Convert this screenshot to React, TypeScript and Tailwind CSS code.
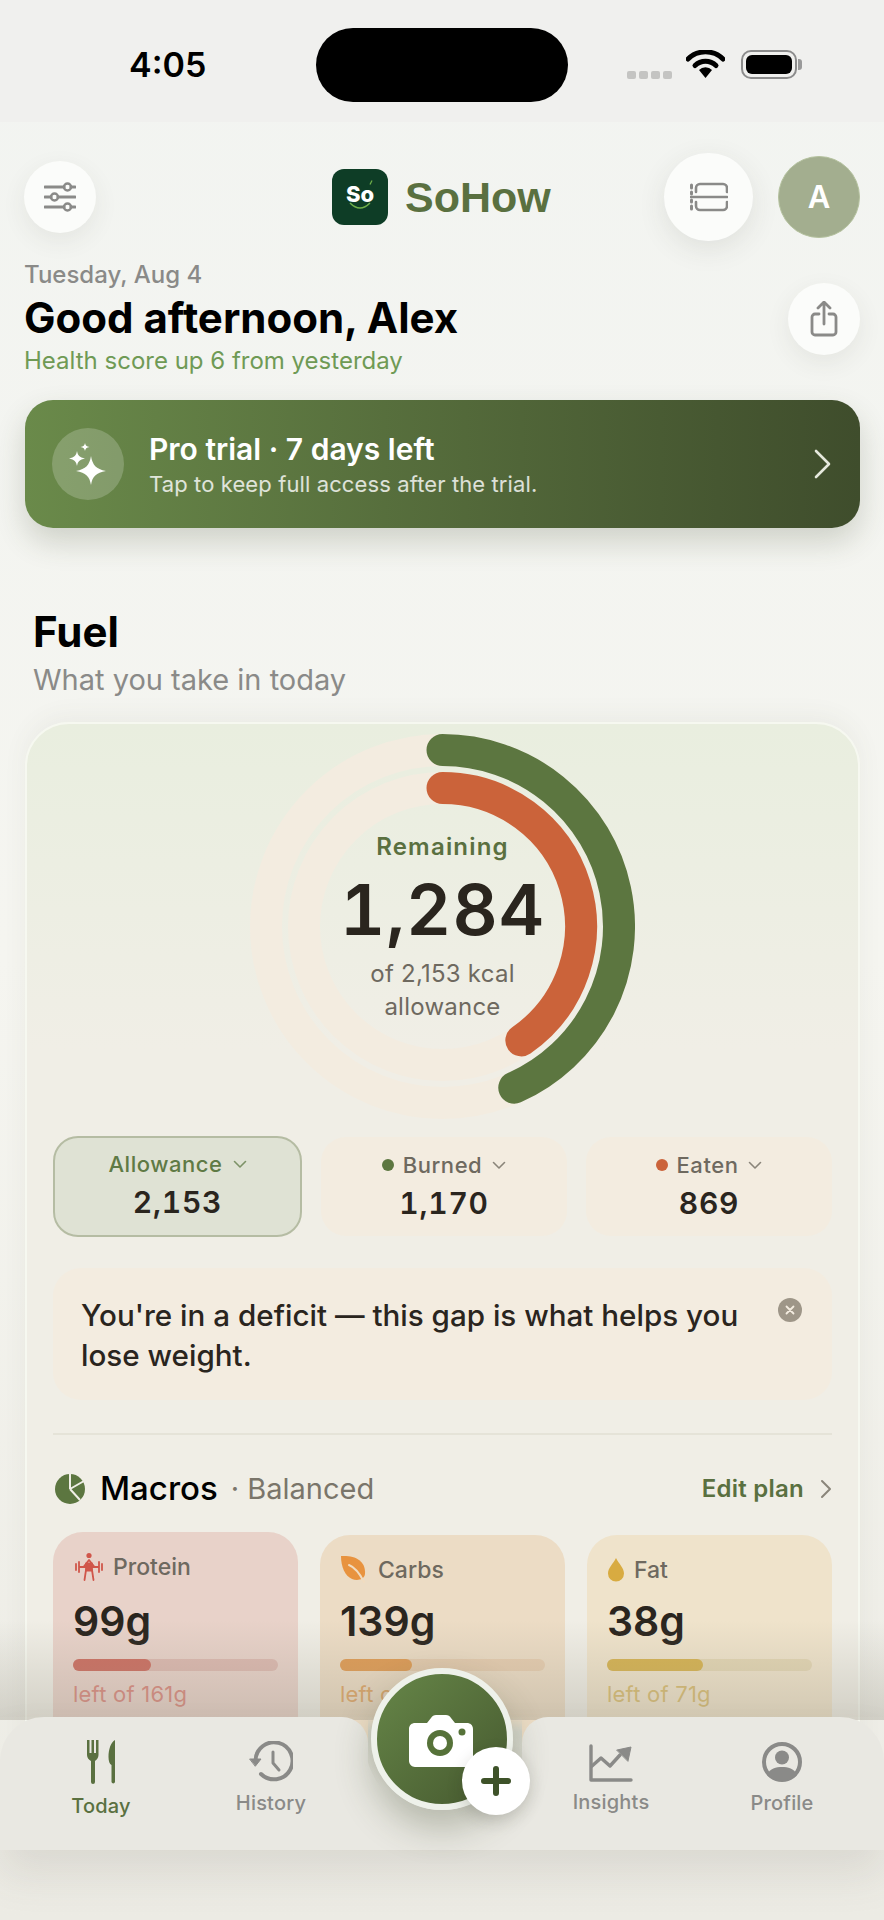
import React from "react";

const F = "font-['Inter','Noto_Sans',sans-serif]";

function arc(r: number, deg: number) {
  const c = 192.5;
  const a = (deg * Math.PI) / 180;
  return `M ${c} ${c - r} A ${r} ${r} 0 0 1 ${c + r * Math.sin(a)} ${c - r * Math.cos(a)}`;
}

function Ring() {
  return (
    <div className="grid w-[385px] h-[385px] mx-auto">
      <svg width="385" height="385" viewBox="0 0 385 385" className="[grid-area:1/1]">
        <circle cx="192.5" cy="192.5" r="176.5" fill="none" stroke="#f3ece0" strokeWidth="32" />
        <circle cx="192.5" cy="192.5" r="138.5" fill="none" stroke="#f3ece0" strokeWidth="32" />
        <path d={arc(176.5, 156)} fill="none" stroke="#5c7640" strokeWidth="32" strokeLinecap="round" />
        <path d={arc(138.5, 145.3)} fill="none" stroke="#cb633a" strokeWidth="32" strokeLinecap="round" />
      </svg>
      <div className="[grid-area:1/1] flex flex-col items-center pt-[99px]">
        <div className="text-[24px] leading-[28px] font-semibold tracking-[0.05em] text-[#5a7040]">Remaining</div>
        <div className="text-[70px] leading-[84px] mt-[7px] font-semibold tabular-nums tracking-[0.015em] text-[#2a251e]">1,284</div>
        <div className="text-[24px] leading-[33px] mt-[5px] tracking-[0.01em] text-[#6e695f] text-center">
          of 2,153 kcal
          <br />
          allowance
        </div>
      </div>
    </div>
  );
}

function Chev({ c = "#8a857a" }: { c?: string }) {
  return (
    <svg width="14" height="9" viewBox="0 0 14 9" fill="none">
      <path d="M1.5 1.5 L7 7 L12.5 1.5" stroke={c} strokeWidth="1.6" strokeLinecap="round" strokeLinejoin="round" />
    </svg>
  );
}

function Tile({ label, value, dot, active }: { label: string; value: string; dot?: string; active?: boolean }) {
  return (
    <div
      className={
        active
          ? "w-[249px] h-[101px] rounded-[25px] bg-[#dfe2d4] border-2 border-[#b5bca3] flex flex-col items-center pt-[12px]"
          : "w-[246px] h-[99px] rounded-[25px] bg-[#f3ece0] flex flex-col items-center pt-[14px]"
      }
    >
      <div className={`flex items-center text-[22px] leading-[28px] font-medium tracking-[0.025em] ${active ? "text-[#5f7a45]" : "text-[#6e695f]"}`}>
        {dot && <span className="w-[12px] h-[12px] rounded-full mr-[9px]" style={{ background: dot }} />}
        <span>{label}</span>
        <span className="ml-[10px]">
          <Chev c={active ? "#7d9267" : "#8a857a"} />
        </span>
      </div>
      <div className="text-[30px] leading-[38px] mt-[5px] font-semibold tabular-nums tracking-[0.025em] text-[#2a251e]">{value}</div>
    </div>
  );
}

function Lifter() {
  return (
    <svg width="28" height="30" viewBox="0 0 28 30" fill="none" stroke="#d0564a" strokeWidth="1.8" strokeLinecap="round" strokeLinejoin="round">
      <circle cx="14" cy="3.5" r="2.6" fill="#d0564a" stroke="none" />
      <path d="M1 12v6M4 10v10M24 10v10M27 12v6M4 15h20" />
      <path d="M8.500 15 L14 8 L19.500 15" />
      <path d="M11 11.500h6v7h-6z" fill="#d0564a" />
      <path d="M11 18 L9.500 28M17 18 L18.500 28" />
    </svg>
  );
}
function Leaf() {
  return (
    <svg width="28" height="30" viewBox="0 0 28 30">
      <path d="M1 1 C14 0 26 5 25 19 C24 25 17 26 12 24 C5 21 1 12 1 1 Z" fill="#e8933f" />
      <path d="M9 10 C14 12 19 17 24 27" fill="none" stroke="#f1dcc0" strokeWidth="2" strokeLinecap="round" />
    </svg>
  );
}
function Drop() {
  return (
    <svg width="18" height="24" viewBox="0 0 18 24">
      <path d="M9 0 C12 6 17 10 17 15.500 A8 8 0 0 1 1 15.500 C1 10 6 6 9 0 Z" fill="#d8ab41" />
    </svg>
  );
}

function Macro({ icon, label, val, left, fill, bg, track, bar, leftC, top, gap, valMt, leftMt }: {
  icon: React.ReactNode; label: string; val: string; left: string; fill: number; bg: string; track: string; bar: string; leftC: string; top: string; gap: string; valMt: string; leftMt: string;
}) {
  return (
    <div className={`w-[245px] h-[260px] rounded-[30px] px-[20px] pt-[20px] ${bg} ${top}`}>
      <div className={`flex items-center h-[30px] text-[23px] font-medium text-[#6e695f] ${gap}`}>
        {icon}
        <span>{label}</span>
      </div>
      <div className={`text-[41px] leading-[48px] font-semibold text-[#2a251e] ${valMt}`}>{val}</div>
      <div className={`h-[12px] mt-[14px] rounded-full ${track}`}>
        <div className={`h-full rounded-full ${bar}`} style={{ width: `${fill}%` }} />
      </div>
      <div className={`text-[22px] leading-[28px] tracking-[0.01em] ${leftC} ${leftMt}`}>{left}</div>
    </div>
  );
}

function Tab({ icon, label, active, cls, labelCls }: { icon: React.ReactNode; label: string; active?: boolean; cls: string; labelCls: string }) {
  return (
    <div className={`flex flex-col items-center w-[120px] ${cls}`}>
      <div className="h-[46px] flex items-center justify-center">{icon}</div>
      <div className={`text-[20px] leading-[26px] font-medium tracking-[0.01em] ${labelCls} ${active ? "text-[#5a7040]" : "text-[#8a8a88]"}`}>{label}</div>
    </div>
  );
}

export default function App() {
  return (
    <div className={`relative w-[884px] h-[1920px] overflow-hidden bg-gradient-to-b from-[#f2f4f1] via-[#f5f5f0] to-[#ecebe4] ${F}`}>
      {/* status bar */}
      <div className="h-[122px] bg-[#f0f0ee] flex items-start">
        <div className="ml-[129px] mt-[44px] text-[34px] leading-[42px] font-semibold text-black w-[187px]">4:05</div>
        <div className="mt-[28px] w-[252px] h-[74px] rounded-[37px] bg-black" />
        <div className="ml-[59px] mt-[71px] flex gap-[3px]">
          {[0, 1, 2, 3].map((i) => (
            <span key={i} className="w-[9px] h-[8px] rounded-[2px] bg-[#c4c4c2]" />
          ))}
        </div>
        <svg className="ml-[14px] mt-[50px]" width="39" height="28" viewBox="0 0 39 28">
          <path d="M2 9 A25 25 0 0 1 37 9" fill="none" stroke="#000" strokeWidth="5" strokeLinecap="round" />
          <path d="M9 15.500 A15 15 0 0 1 30 15.500" fill="none" stroke="#000" strokeWidth="5" strokeLinecap="round" />
          <path d="M13 20 A9 9 0 0 1 26 20 L19.500 28 Z" fill="#000" />
        </svg>
        <div className="ml-[16px] mt-[50px] flex items-center">
          <div className="w-[56px] h-[29px] rounded-[10px] border-2 border-[#8c8c8c] p-[3px]">
            <div className="w-full h-full rounded-[6px] bg-black" />
          </div>
          <div className="w-[4px] h-[11px] ml-[1px] rounded-r-[3px] bg-[#9a9a9a]" />
        </div>
      </div>

      {/* header */}
      <div className="h-[88px] mt-[31px] flex items-center pl-[24px] pr-[24px]">
        <div className="w-[72px] h-[72px] rounded-full bg-[#fbfcfa] shadow-[0_8px_24px_rgba(60,60,50,0.08)] flex items-center justify-center">
          <svg width="32" height="30" viewBox="0 0 32 30" fill="none" stroke="#8a8a88" strokeWidth="3" strokeLinecap="round">
            <path d="M1 5h19M27 5h4M1 15h6M14 15h17M1 25h19M27 25h4" />
            <circle cx="23.500" cy="5" r="3.500" strokeWidth="2.500" />
            <circle cx="10.500" cy="15" r="3.500" strokeWidth="2.500" />
            <circle cx="23.500" cy="25" r="3.500" strokeWidth="2.500" />
          </svg>
        </div>
        <div className="ml-[236px] w-[56px] h-[56px] rounded-[12px] bg-[#0e3d26] flex flex-col items-center justify-center">
          <svg className="self-end mr-[15px] mt-[-4px] mb-[1px]" width="4" height="5" viewBox="0 0 4 5">
            <path d="M1 4.500 L3 0.500" stroke="#6fb04a" strokeWidth="1.200" />
          </svg>
          <span className="text-[22px] leading-[22px] font-extrabold text-white mt-[-3px]">So</span>
          <svg className="mt-[-3px]" width="24" height="8" viewBox="0 0 24 8">
            <path d="M2 1 Q12 11 22 1" fill="none" stroke="#6fb04a" strokeWidth="1.500" />
          </svg>
        </div>
        <div className="ml-[17px] font-['Liberation_Sans',sans-serif] font-bold text-[43px] leading-[50px] text-[#5a7040]">SoHow</div>
        <div className="ml-auto w-[89px] h-[88px] rounded-full bg-[#fbfcfa] shadow-[0_8px_28px_rgba(60,60,50,0.1)] flex items-center justify-center">
          <svg width="38" height="30" viewBox="0 0 38 30" fill="none" stroke="#8a8a88" strokeWidth="2.600" strokeLinecap="round">
            <path d="M6 10V6a4 4 0 0 1 4-4h23a4 4 0 0 1 4 4v4M37 20v4a4 4 0 0 1-4 4H10a4 4 0 0 1-4-4v-4" />
            <path d="M1 15h36" />
            <path d="M1.500 3v3M1.500 10v2M1.500 18v2M1.500 24v3" strokeWidth="3" />
          </svg>
        </div>
        <div className="ml-[25px] w-[82px] h-[82px] rounded-full bg-[#a3ae8f] border border-[#b5c29f] flex items-center justify-center text-white text-[31px] font-semibold">A</div>
      </div>

      {/* greeting */}
      <div className="flex items-start pl-[24px] pr-[24px] mt-[20px]">
        <div>
          <div className="text-[24px] leading-[28px] font-medium text-[#8a8a88]">Tuesday, Aug 4</div>
          <div className="text-[42px] leading-[50px] mt-[4px] font-bold text-black">Good afternoon, Alex</div>
          <div className="text-[24px] leading-[28px] mt-[4px] text-[#6f9a55]">Health score up 6 from yesterday</div>
        </div>
        <div className="ml-auto mt-[22px] w-[72px] h-[72px] rounded-full bg-[#fbfcfa] shadow-[0_8px_24px_rgba(60,60,50,0.08)] flex items-center justify-center">
          <svg width="28" height="36" viewBox="0 0 28 36" fill="none" stroke="#8a8a88" strokeWidth="2.800" strokeLinecap="round" strokeLinejoin="round">
            <path d="M14 23V2M8 7l6-6 6 6" />
            <path d="M9 13H5a3 3 0 0 0-3 3v15a3 3 0 0 0 3 3h18a3 3 0 0 0 3-3V16a3 3 0 0 0-3-3h-4" />
          </svg>
        </div>
      </div>

      {/* banner */}
      <div className="mx-[25px] mt-[25px] w-[835px] h-[128px] rounded-[28px] bg-gradient-to-r from-[#6a8a4a] to-[#3f4d2c] shadow-[0_14px_30px_rgba(60,70,40,0.2)] flex items-center pl-[27px] pr-[28px]">
        <div className="w-[72px] h-[72px] rounded-full bg-white/20 flex items-center justify-center">
          <svg width="38" height="42" viewBox="0 0 38 42" fill="#fff">
            <path d="M22 13 C23.500 22 27 26 37 28 C27 30 23.500 33 22 42 C20.500 33 17 30 7 28 C17 26 20.500 22 22 13 Z" />
            <path d="M8 8 C8.800 12.500 10.500 14.500 16 15.500 C10.500 16.500 8.800 18.500 8 23 C7.200 18.500 5.500 16.500 0 15.500 C5.500 14.500 7.200 12.500 8 8 Z" />
            <path d="M16 0 C16.400 2.500 17.500 3.600 20.500 4 C17.500 4.400 16.400 5.500 16 8 C15.600 5.500 14.500 4.400 11.500 4 C14.500 3.600 15.600 2.500 16 0 Z" />
          </svg>
        </div>
        <div className="ml-[25px]">
          <div className="text-[30px] leading-[34px] font-semibold text-white">Pro trial · 7 days left</div>
          <div className="text-[22px] leading-[26px] mt-[5px] tracking-[0.005em] text-white/80">Tap to keep full access after the trial.</div>
        </div>
        <svg className="ml-auto" width="18" height="30" viewBox="0 0 18 30" fill="none">
          <path d="M2 2 L15 15 L2 28" stroke="#e6e9dd" strokeWidth="2.600" strokeLinecap="round" strokeLinejoin="round" />
        </svg>
      </div>

      {/* fuel */}
      <div className="pl-[33px] mt-[80px]">
        <div className="text-[42px] leading-[48px] font-bold text-black">Fuel</div>
        <div className="text-[29px] leading-[34px] mt-[7px] text-[#8a8a88]">What you take in today</div>
      </div>

      <div className="mx-[25px] mt-[25px] w-[835px] h-[1090px] overflow-hidden rounded-[44px] border-2 border-[#f6f8f0] bg-[linear-gradient(180deg,#e9eedf_0%,#f0eee6_30%,#f0eee6_100%)] shadow-[0_-6px_24px_rgba(80,80,60,0.06)] px-[26px] pt-[10px]">
        <div className="mx-[-26px]">
          <Ring />
        </div>
        <div className="flex justify-between items-center mt-[17px]">
          <Tile label="Allowance" value="2,153" active />
          <Tile label="Burned" value="1,170" dot="#5c7640" />
          <Tile label="Eaten" value="869" dot="#cb633a" />
        </div>
        <div className="mt-[31px] h-[132px] rounded-[28px] bg-[#f3ece0] flex items-start pl-[28px] pr-[30px] pt-[27px]">
          <div className="text-[29.6px] leading-[40px] font-medium text-[#2a251e] w-[690px]">You're in a deficit — this gap is what helps you lose weight.</div>
          <div className="ml-auto mt-[3px] w-[24px] h-[24px] rounded-full bg-[#9e9688] flex items-center justify-center">
            <svg width="10" height="10" viewBox="0 0 10 10">
              <path d="M1.500 1.500 L8.500 8.500 M8.500 1.500 L1.500 8.500" stroke="#f3ece0" strokeWidth="1.800" strokeLinecap="round" />
            </svg>
          </div>
        </div>
        <div className="h-[2px] mt-[33px] bg-[#e5e3d8]" />
        <div className="flex items-center h-[40px] mt-[34px]">
          <svg className="ml-[2px]" width="30" height="30" viewBox="0 0 30 30">
            <circle cx="15" cy="15" r="15" fill="#5c7640" />
            <path d="M15 15 L15 0 M15 15 L29 7 M15 15 L25 26" stroke="#f0eee6" strokeWidth="2" />
          </svg>
          <span className="ml-[15px] text-[33px] font-medium text-black">Macros</span>
          <span className="ml-[13px] text-[29px] text-[#7a756a]">· Balanced</span>
          <span className="ml-auto text-[24px] font-semibold tracking-[0.01em] text-[#5a7040]">Edit plan</span>
          <svg className="ml-[16px] mr-[0px]" width="12" height="20" viewBox="0 0 12 20" fill="none">
            <path d="M2 2 L10 10 L2 18" stroke="#8a857a" strokeWidth="2" strokeLinecap="round" strokeLinejoin="round" />
          </svg>
        </div>
        <div className="flex justify-between items-start mt-[23px]">
          <Macro icon={<span className="ml-[2px] flex"><Lifter /></span>} label="Protein" val="99g" left="left of 161g" fill={38} gap="gap-[10px]" top="mt-0" valMt="mt-[15px]" leftMt="mt-[9px]" bg="bg-[#e8d2c9]" track="bg-[#dcb9b0]" bar="bg-[#cc6f62]" leftC="text-[#d98a80]" />
          <Macro icon={<Leaf />} label="Carbs" val="139g" left="left of 201g" fill={35} gap="gap-[10px]" top="mt-[3px]" valMt="mt-[12px]" leftMt="mt-[9px]" bg="bg-[#ecdcc5]" track="bg-[#e6cdb0]" bar="bg-[#e09c55]" leftC="text-[#dfa769]" />
          <Macro icon={<Drop />} label="Fat" val="38g" left="left of 71g" fill={47} gap="gap-[9px]" top="mt-[3px]" valMt="mt-[12px]" leftMt="mt-[9px]" bg="bg-[#efe3cb]" track="bg-[#e3d6b4]" bar="bg-[#d6b352]" leftC="text-[#d8bd74]" />
        </div>
      </div>

      {/* shade above tab bar */}
      <div className="absolute left-0 right-0 top-[1620px] h-[100px] bg-gradient-to-b from-transparent to-[#8e8a7a]/30" />

      {/* tab bar */}
      <div className="absolute left-0 right-0 top-[1717px] h-[133px] flex shadow-[0_24px_40px_rgba(90,85,70,0.12)]">
        <div className="w-[368px] h-full rounded-tl-[44px] rounded-tr-[26px] bg-[#e9e8e2] flex pt-[22px]">
          <Tab cls="ml-[41px]" active label="Today" labelCls="mt-[8px]" icon={
            <svg width="30" height="46" viewBox="2 0 30 46" fill="#5a7040">
              <path d="M3 1h2.500v13h2V1h2.500v13h2V1h2.500v15c0 3-2 5-3.500 6v21a2 2 0 0 1-4 0V22C5 21 3 19 3 16Z" />
              <path d="M31 43V1c-4 2-6.500 9-6.500 17 0 4 1 7 3 8v17a1.800 1.800 0 0 0 3.500 0Z" />
            </svg>
          } />
          <Tab cls="ml-[50px]" label="History" labelCls="mt-[5px]" icon={
            <svg width="44" height="42" viewBox="0 0 44 42" fill="none" stroke="#8a8a88" strokeWidth="4" strokeLinecap="round" strokeLinejoin="round">
              <path d="M6.500 20A18.500 18.500 0 1 1 12 33" />
              <path d="M1 18h11l-5.500 7Z" fill="#8a8a88" strokeWidth="1" />
              <path d="M24 11v11l6 7" strokeWidth="3" />
            </svg>
          } />
        </div>
        <div className="w-[154px] h-full bg-[linear-gradient(180deg,rgba(233,232,226,0)_20px,#e9e8e2_70px),radial-gradient(circle_at_50%_22px,#d4d5ca_80px,#e9e8e2_81px)] [mask-image:linear-gradient(180deg,transparent_0,#000_14px)]" />
        <div className="flex-1 h-full rounded-tl-[26px] rounded-tr-[44px] bg-[#e9e8e2] flex pt-[22px]">
          <Tab cls="ml-[29px]" label="Insights" labelCls="mt-[4px]" icon={
            <svg className="mt-[2px]" width="44" height="38" viewBox="0 0 44 38" fill="none" stroke="#8a8a88" strokeWidth="3.400" strokeLinecap="round" strokeLinejoin="round">
              <path d="M2 2v34h40" />
              <path d="M3 22l9-8 9 8 10-11" />
              <path d="M28 6l14-3-3 14Z" fill="#8a8a88" strokeWidth="1" />
            </svg>
          } />
          <Tab cls="ml-[51px]" label="Profile" labelCls="mt-[5px]" icon={
            <svg width="40" height="40" viewBox="0 0 40 40">
              <circle cx="20" cy="20" r="18" fill="none" stroke="#8a8a88" strokeWidth="4" />
              <circle cx="20" cy="15.500" r="7" fill="#8a8a88" />
              <path d="M5 33 C8 26 14 25 20 25 C26 25 32 26 35 33 C31 37 26 38 20 38 C14 38 9 37 5 33 Z" fill="#8a8a88" />
            </svg>
          } />
        </div>
      </div>

      {/* camera button */}
      <div className="absolute left-[371px] top-[1668px] w-[142px] h-[142px] rounded-full border-[6px] border-[#eef1ea] bg-gradient-to-br from-[#668648] to-[#46592f] shadow-[0_18px_36px_rgba(60,70,40,0.3)] flex items-center justify-center">
        <svg className="mt-[3px] ml-[-2px]" width="64" height="52" viewBox="0 0 64 52">
          <path d="M6 8h12l4-5c1-2 3-3 5-3h10c2 0 4 1 5 3l4 5h12c3 0 6 2 6 6v32c0 3-3 6-6 6H6c-3 0-6-3-6-6V14c0-4 3-6 6-6Z" fill="#fff" />
          <circle cx="31" cy="28" r="13" fill="#567239" />
          <circle cx="31" cy="28" r="7" fill="#fff" />
          <circle cx="53" cy="17" r="3.500" fill="#567239" />
        </svg>
      </div>
      <div className="absolute left-[462px] top-[1747px] w-[68px] h-[68px] rounded-full bg-white shadow-[0_6px_16px_rgba(40,40,30,0.18)] flex items-center justify-center">
        <svg width="30" height="30" viewBox="0 0 30 30">
          <path d="M15 3v24M3 15h24" stroke="#3e5229" strokeWidth="6" strokeLinecap="round" />
        </svg>
      </div>
    </div>
  );
}
